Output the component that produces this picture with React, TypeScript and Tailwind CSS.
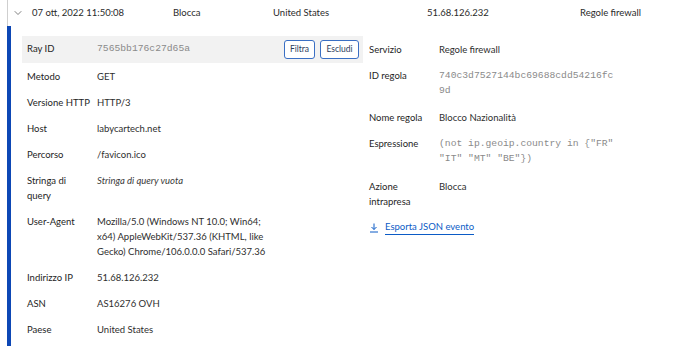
import { ChevronDown } from "lucide-react";

type Row = { label: string[]; value: string[]; mono?: boolean; italic?: boolean };

const left: Row[] = [
  { label: ["Metodo"], value: ["GET"] },
  { label: ["Versione HTTP"], value: ["HTTP/3"] },
  { label: ["Host"], value: ["labycartech.net"] },
  { label: ["Percorso"], value: ["/favicon.ico"] },
  { label: ["Stringa di", "query"], value: ["Stringa di query vuota"], italic: true },
  {
    label: ["User-Agent"],
    value: ["Mozilla/5.0 (Windows NT 10.0; Win64;", "x64) AppleWebKit/537.36 (KHTML, like", "Gecko) Chrome/106.0.0.0 Safari/537.36"],
  },
  { label: ["Indirizzo IP"], value: ["51.68.126.232"] },
  { label: ["ASN"], value: ["AS16276 OVH"] },
  { label: ["Paese"], value: ["United States"] },
];

const right: Row[] = [
  { label: ["Servizio"], value: ["Regole firewall"] },
  { label: ["ID regola"], value: ["740c3d7527144bc69688cdd54216fc", "9d"], mono: true },
  { label: ["Nome regola"], value: ["Blocco Nazionalità"] },
  { label: ["Espressione"], value: ['(not ip.geoip.country in {"FR"', '"IT" "MT" "BE"})'], mono: true },
  { label: ["Azione", "intrapresa"], value: ["Blocca"] },
];

const DetailRow = ({ row }: { row: Row }) => (
  <div className={`flex py-[5.5px] leading-[15px] ${row.mono ? "pb-[7px]" : ""}`}>
    <div className="w-[66px] mr-[4px] shrink-0 text-[#1e1e1e]">
      {row.label.map((l) => (
        <div key={l}>{l}</div>
      ))}
    </div>
    <div
      className={
        row.mono
          ? "font-['Liberation_Mono',monospace] text-[9.7px] text-[#8a8a8a]"
          : row.italic
            ? "italic text-[#3a3a3a]"
            : "text-[#2e2e2e]"
      }
    >
      {row.value.map((v) => (
        <div key={v}>{v}</div>
      ))}
    </div>
  </div>
);

export default function App() {
  return (
    <div className="w-[690px] h-[346px] overflow-hidden bg-white pl-[7px] font-['Lato','Noto_Sans',sans-serif] text-[9.5px] text-[#2a2a2a]">
      <div className="flex h-[26px] items-center border-l border-[#cfcfcf]">
        <div className="w-[24px] pl-[4px] text-[#555]">
          <ChevronDown size={12} strokeWidth={1.5} />
        </div>
        <div className="w-[141px]">07 ott, 2022 11:50:08</div>
        <div className="w-[100px]">Blocca</div>
        <div className="w-[154px]">United States</div>
        <div className="w-[153px]">51.68.126.232</div>
        <div>Regole firewall</div>
      </div>

      <div className="grid h-[320px] grid-cols-[341px_1fr] border-l-4 border-[#0d47b5] pl-[11px] pt-[10px]">
        <div>
          <div className="flex h-[27px] items-center bg-[#f2f2f2] pl-[5px] pr-[4px]">
            <div className="w-[70px] text-[#1e1e1e]">Ray ID</div>
            <div className="font-['Liberation_Mono',monospace] text-[9.7px] text-[#8a8a8a]">7565bb176c27d65a</div>
            <div className="ml-auto flex gap-[5px]">
              <button className="h-[19px] w-[31px] rounded-[3px] border border-[#3a6fc4] bg-white text-[8.5px] text-[#2a3b5c]">
                Filtra
              </button>
              <button className="h-[19px] w-[39px] rounded-[3px] border border-[#3a6fc4] bg-white text-[8.5px] text-[#2a3b5c]">
                Escludi
              </button>
            </div>
          </div>
          <div className="pl-[5px]">
            {left.map((r) => (
              <DetailRow key={r.label.join(" ")} row={r} />
            ))}
          </div>
        </div>

        <div className="pl-[6px]">
          <div>
            {right.map((r) => (
              <DetailRow key={r.label.join(" ")} row={r} />
            ))}
          </div>
          <a className="mt-[6px] flex items-center gap-[6px] text-[#0b5bc6]">
            <svg width="10" height="10" viewBox="0 0 10 10" fill="none" stroke="#0b5bc6" strokeWidth="1">
              <path d="M5 0.5v6M2.5 4l2.5 2.5L7.5 4M1 9h8" />
            </svg>
            <span className="border-b border-[#0b5bc6] leading-[14px]">Esporta JSON evento</span>
          </a>
        </div>
      </div>
    </div>
  );
}
